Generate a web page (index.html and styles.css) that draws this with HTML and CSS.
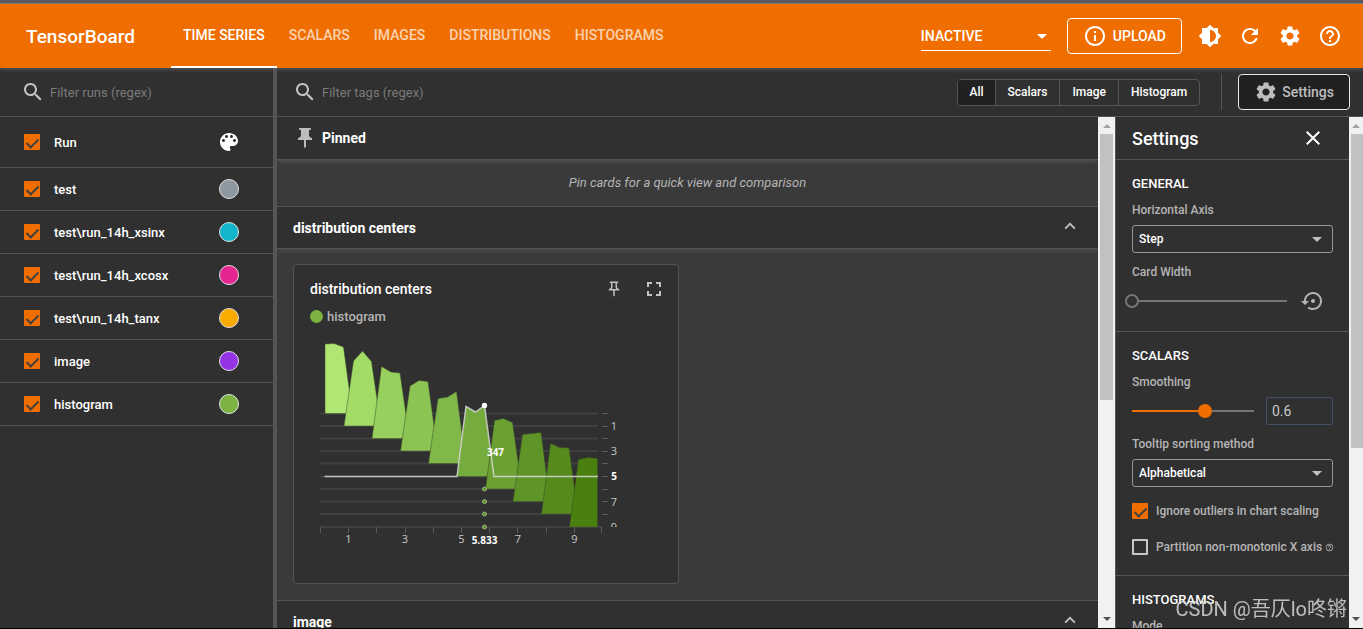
FILE: index.html
```html
<!DOCTYPE html>
<html lang="en">
<head>
<meta charset="utf-8">
<title>TensorBoard</title>
<link rel="stylesheet" href="styles.css">
</head>
<body>
<svg class="sprite" aria-hidden="true">
  <symbol id="i-search" viewBox="0 0 24 24"><path d="M15.5 14h-.79l-.28-.27C15.41 12.59 16 11.11 16 9.5 16 5.91 13.09 3 9.5 3S3 5.91 3 9.5 5.91 16 9.5 16c1.61 0 3.09-.59 4.23-1.57l.27.28v.79l5 4.99L20.49 19l-4.99-5zm-6 0C7.01 14 5 11.99 5 9.5S7.01 5 9.5 5 14 7.01 14 9.5 11.99 14 9.5 14z"/></symbol>
  <symbol id="i-gear" viewBox="0 0 24 24"><path d="M19.14 12.94c.04-.3.06-.61.06-.94 0-.32-.02-.64-.07-.94l2.03-1.58c.18-.14.23-.41.12-.61l-1.92-3.32c-.12-.22-.37-.29-.59-.22l-2.39.96c-.5-.38-1.03-.7-1.62-.94l-.36-2.54c-.04-.24-.24-.41-.48-.41h-3.84c-.24 0-.43.17-.47.41l-.36 2.54c-.59.24-1.13.57-1.62.94l-2.39-.96c-.22-.08-.47 0-.59.22L2.74 8.87c-.12.21-.08.47.12.61l2.03 1.58c-.05.3-.09.63-.09.94s.02.64.07.94l-2.03 1.58c-.18.14-.23.41-.12.61l1.92 3.32c.12.22.37.29.59.22l2.39-.96c.5.38 1.03.7 1.62.94l.36 2.54c.05.24.24.41.48.41h3.84c.24 0 .44-.17.47-.41l.36-2.54c.59-.24 1.13-.56 1.62-.94l2.39.96c.22.08.47 0 .59-.22l1.92-3.32c.12-.22.07-.47-.12-.61l-2.01-1.58zM12 15.6c-1.98 0-3.6-1.62-3.6-3.6s1.62-3.6 3.6-3.6 3.6 1.62 3.6 3.6-1.62 3.6-3.6 3.6z"/></symbol>
  <symbol id="i-help" viewBox="0 0 24 24"><path d="M11 18h2v-2h-2v2zm1-16C6.48 2 2 6.48 2 12s4.48 10 10 10 10-4.48 10-10S17.52 2 12 2zm0 18c-4.41 0-8-3.59-8-8s3.59-8 8-8 8 3.59 8 8-3.59 8-8 8zm0-14c-2.21 0-4 1.79-4 4h2c0-1.1.9-2 2-2s2 .9 2 2c0 2-3 1.75-3 5h2c0-2.25 3-2.5 3-5 0-2.21-1.79-4-4-4z"/></symbol>
  <symbol id="i-up" viewBox="0 0 24 24"><path d="M12 6l-6 6 1.41 1.41L12 8.83l4.59 4.58L18 12z"/></symbol>
</svg>

<header class="topbar">
  <h1 class="brand">TensorBoard</h1>
  <nav class="tabs">
    <a class="tab tab-active" href="#timeseries">TIME SERIES</a>
    <a class="tab" href="#scalars">SCALARS</a>
    <a class="tab" href="#images">IMAGES</a>
    <a class="tab" href="#distributions">DISTRIBUTIONS</a>
    <a class="tab" href="#histograms">HISTOGRAMS</a>
  </nav>
  <div class="topbar-actions">
    <div class="plugin-select">
      <select aria-label="Inactive plugins"><option>INACTIVE</option></select>
      <span class="caret"></span>
    </div>
    <button class="upload" type="button">
      <svg class="icon" viewBox="0 0 24 24"><path d="M11 7h2v2h-2zm0 4h2v6h-2zm1-9C6.48 2 2 6.48 2 12s4.480 10 10 10 10-4.480 10-10S17.520 2 12 2zm0 18c-4.410 0-8-3.590-8-8s3.590-8 8-8 8 3.590 8 8-3.590 8-8 8z"/></svg>
      UPLOAD
    </button>
    <div class="icon-row">
      <button class="icon-button" type="button" aria-label="Toggle theme"><svg class="icon" viewBox="0 0 24 24"><path d="M20 15.310L23.310 12 20 8.690V4h-4.690L12 .69 8.690 4H4v4.690L.69 12 4 15.310V20h4.690L12 23.310 15.310 20H20v-4.690zM12 18V6c3.310 0 6 2.690 6 6s-2.690 6-6 6z"/></svg></button>
      <button class="icon-button" type="button" aria-label="Reload"><svg class="icon" viewBox="0 0 24 24"><path d="M17.650 6.350C16.200 4.900 14.210 4 12 4c-4.420 0-7.990 3.580-7.990 8s3.570 8 7.990 8c3.730 0 6.840-2.550 7.730-6h-2.080c-.82 2.330-3.040 4-5.650 4-3.310 0-6-2.690-6-6s2.690-6 6-6c1.660 0 3.140.69 4.220 1.780L13 11h7V4l-2.350 2.350z"/></svg></button>
      <button class="icon-button" type="button" aria-label="Preferences"><svg class="icon"><use href="#i-gear"/></svg></button>
      <a class="icon-button" href="#help" aria-label="Help"><svg class="icon"><use href="#i-help"/></svg></a>
    </div>
  </div>
</header>

<div class="workspace">
  <aside class="runs">
    <label class="filter">
      <svg class="icon"><use href="#i-search"/></svg>
      <input type="text" placeholder="Filter runs (regex)" aria-label="Filter runs">
    </label>
    <div class="run run-head">
      <label class="check"><input type="checkbox" checked>Run</label>
      <button class="icon-button palette" type="button" aria-label="Color runs"><svg class="icon" viewBox="0 0 24 24"><path d="M12 3c-4.970 0-9 4.030-9 9s4.030 9 9 9c.83 0 1.500-.67 1.500-1.500 0-.39-.15-.74-.39-1.010-.23-.26-.38-.61-.38-.99 0-.83.67-1.500 1.500-1.500H16c2.760 0 5-2.240 5-5 0-4.420-4.030-8-9-8zm-5.500 9c-.83 0-1.500-.67-1.500-1.500S5.670 9 6.500 9 8 9.670 8 10.500 7.330 12 6.500 12zm3-4C8.670 8 8 7.330 8 6.500S8.670 5 9.500 5s1.500.67 1.500 1.500S10.330 8 9.500 8zm5 0c-.83 0-1.500-.67-1.500-1.500S13.670 5 14.500 5s1.500.67 1.500 1.500S15.330 8 14.500 8zm3 4c-.83 0-1.500-.67-1.500-1.500S16.670 9 17.500 9s1.500.67 1.500 1.500-.67 1.500-1.500 1.500z"/></svg></button>
    </div>
    <div class="run"><label class="check"><input type="checkbox" checked>test</label><button class="swatch gray" type="button" aria-label="test color"></button></div>
    <div class="run"><label class="check"><input type="checkbox" checked>test\run_14h_xsinx</label><button class="swatch cyan" type="button" aria-label="xsinx color"></button></div>
    <div class="run"><label class="check"><input type="checkbox" checked>test\run_14h_xcosx</label><button class="swatch pink" type="button" aria-label="xcosx color"></button></div>
    <div class="run"><label class="check"><input type="checkbox" checked>test\run_14h_tanx</label><button class="swatch amber" type="button" aria-label="tanx color"></button></div>
    <div class="run"><label class="check"><input type="checkbox" checked>image</label><button class="swatch purple" type="button" aria-label="image color"></button></div>
    <div class="run"><label class="check"><input type="checkbox" checked>histogram</label><button class="swatch green" type="button" aria-label="histogram color"></button></div>
  </aside>

  <main class="content">
    <div class="toolbar">
      <label class="filter">
        <svg class="icon"><use href="#i-search"/></svg>
        <input type="text" placeholder="Filter tags (regex)" aria-label="Filter tags">
      </label>
      <div class="chips">
        <button class="chip chip-on" type="button">All</button>
        <button class="chip" type="button">Scalars</button>
        <button class="chip" type="button">Image</button>
        <button class="chip" type="button">Histogram</button>
      </div>
      <div class="settings-slot">
        <button class="settings-button" type="button"><svg class="icon"><use href="#i-gear"/></svg>Settings</button>
      </div>
    </div>

    <div class="split">
      <div class="cards">
        <div class="group-head">
          <svg class="icon pin" viewBox="0 0 24 24"><path d="M16 9V4h1c.55 0 1-.45 1-1s-.45-1-1-1H7c-.55 0-1 .45-1 1s.45 1 1 1h1v5c0 1.660-1.340 3-3 3v2h5.970v7l1 1 1-1v-7H19v-2c-1.660 0-3-1.340-3-3z"/></svg>
          <h2>Pinned</h2>
        </div>
        <p class="pin-hint">Pin cards for a quick view and comparison</p>
        <div class="group-head ruled">
          <h2>distribution centers</h2>
          <button class="icon-button fold" type="button" aria-label="Collapse distribution centers"><svg class="icon"><use href="#i-up"/></svg></button>
        </div>
        <div class="card-grid">
          <article class="card">
            <div class="card-head">
              <h3>distribution centers</h3>
              <button class="icon-button" type="button" aria-label="Pin card"><svg class="icon icon-small" viewBox="0 0 24 24"><path d="M14 4v5c0 1.120.37 2.160 1 3H9c.65-.86 1-1.900 1-3V4h4m3-2H7c-.55 0-1 .45-1 1s.45 1 1 1h1v5c0 1.660-1.340 3-3 3v2h5.970v7l1 1 1-1v-7H19v-2c-1.660 0-3-1.340-3-3V4h1c.55 0 1-.45 1-1s-.45-1-1-1z"/></svg></button>
              <button class="icon-button" type="button" aria-label="Full size"><svg class="icon" viewBox="0 0 24 24"><path d="M7 14H5v5h5v-2H7v-3zm-2-4h2V7h3V5H5v5zm12 7h-3v2h5v-5h-2v3zM14 5v2h3v3h2V5h-5z"/></svg></button>
            </div>
            <div class="legend"><span class="legend-dot"></span>histogram</div>
            <svg class="chart" viewBox="310 330 352 230" role="img" aria-label="Histogram of distribution centers by step">
              <defs><clipPath id="axis-clip"><rect x="600" y="330" width="30" height="197"/></clipPath></defs>
              <path class="grid" d="M320 413.500H598M320 426H598M320 438.500H598M320 451H598M320 463.500H598M320 476.500H598M320 489H598M320 501.500H598M320 514H598M320 527H602"/>
              <path class="ticks" d="M602 413.500h6M602 426.500h6M602 438.500h6M602 451.500h6M602 463.500h6M602 476.500h6M602 489.500h6M602 501.500h6M602 514.500h6M320.500 527v6M348.500 527v6M376.500 527v6M405.500 527v6M433.500 527v6M461.500 527v6M489.500 527v6M517.500 527v6M546.500 527v6M574.500 527v6M601.500 527v6"/>
              <g class="hist">
                <path fill="#b0e673" d="M325 413.500V344L334 343.500 343.500 347 352.500 413.500z"/>
                <path fill="#a2dc67" d="M344 426L353.500 361 362.500 351 371.500 361.500 381 426z"/>
                <path fill="#97d05e" d="M372 438.500L381.500 366.500 391 372 400 373 409.500 438.500z"/>
                <path fill="#8bc453" d="M400.500 451L410 386 419 380.500 428 381.500 437.500 451z"/>
                <path fill="#80b84a" d="M428.500 463.500L438 398.500 447.500 397 456.500 391.500 466 463.500z"/>
                <path fill="#76ac3e" d="M457 476.500L466 406.500 475.500 412 484.500 405.500 494 476.500z"/>
                <path fill="#6ba033" d="M485.500 489L494.500 420.500 503.500 418.500 512.500 422.500 522 489z"/>
                <path fill="#5f9428" d="M513 501.500L522.500 434.500 541 432.500 550 501.500z"/>
                <path fill="#568a1c" d="M541.500 514L550.500 443.500 559.500 447.500 569 448 578 514z"/>
                <path fill="#4a800f" d="M569.500 527L578.500 459.500 588 457.500 597.500 458.500V527z"/>
              </g>
              <path class="hover-line" d="M324.500 476.500H457L466 406.500 475.500 412 484.500 405.500 494 476.500H598"/>
              <circle class="hover-dot" cx="484.500" cy="405.500" r="2.700"/>
              <g class="step-dots"><circle cx="484.500" cy="489" r="2"/><circle cx="484.500" cy="501.500" r="2"/><circle cx="484.500" cy="514" r="2"/><circle cx="484.500" cy="527" r="2"/></g>
              <g class="labels">
                <text x="348.500" y="543">1</text><text x="405" y="543">3</text><text x="461.500" y="543">5</text><text x="518" y="543">7</text><text x="574.500" y="543">9</text>
                <text x="614" y="430">1</text><text x="614" y="455">3</text><text class="strong" x="614" y="480">5</text><text x="614" y="506">7</text>
                <g clip-path="url(#axis-clip)"><text x="614" y="531">9</text></g>
                <text class="strong" x="484.500" y="544">5.833</text>
                <text class="strong" x="495.500" y="456">347</text>
              </g>
            </svg>
          </article>
        </div>
        <div class="group-head ruled">
          <h2>image</h2>
          <button class="icon-button fold" type="button" aria-label="Collapse image"><svg class="icon"><use href="#i-up"/></svg></button>
        </div>
      </div>
      <div class="scrollbar"><span class="arrow arrow-up"></span><span class="thumb thumb-main"></span><span class="arrow arrow-down"></span></div>

      <aside class="settings">
        <div class="settings-head">
          <h2>Settings</h2>
          <button class="icon-button" type="button" aria-label="Close settings"><svg class="icon" viewBox="0 0 24 24"><path d="M19 6.410L17.590 5 12 10.590 6.410 5 5 6.410 10.590 12 5 17.590 6.410 19 12 13.410 17.590 19 19 17.590 13.410 12z"/></svg></button>
        </div>
        <section class="section">
          <h3>GENERAL</h3>
          <div class="field">
            <label for="axis">Horizontal Axis</label>
            <div class="dropdown"><select id="axis"><option>Step</option></select><span class="caret"></span></div>
          </div>
          <div class="field">
            <label for="width">Card Width</label>
            <div class="slider-row">
              <input class="slider slider-empty" id="width" type="range" min="0" max="100" value="0">
              <button class="icon-button reset" type="button" aria-label="Reset card width"><svg class="icon" viewBox="0 0 24 24"><path d="M14 12c0-1.100-.9-2-2-2s-2 .9-2 2 .9 2 2 2 2-.9 2-2zm-2-9c-4.970 0-9 4.030-9 9H0l4 4 4-4H5c0-3.870 3.130-7 7-7s7 3.130 7 7-3.130 7-7 7c-1.510 0-2.910-.49-4.060-1.300l-1.420 1.440C8.040 20.300 9.940 21 12 21c4.970 0 9-4.030 9-9s-4.030-9-9-9z"/></svg></button>
            </div>
          </div>
        </section>
        <section class="section">
          <h3>SCALARS</h3>
          <div class="field">
            <label for="smoothing">Smoothing</label>
            <div class="slider-row">
              <input class="slider" id="smoothing" type="range" min="0" max="1" step="0.01" value="0.6">
              <input class="number" type="text" value="0.6" aria-label="Smoothing value">
            </div>
          </div>
          <div class="field">
            <label for="sorting">Tooltip sorting method</label>
            <div class="dropdown"><select id="sorting"><option>Alphabetical</option></select><span class="caret"></span></div>
          </div>
          <label class="check option"><input type="checkbox" checked>Ignore outliers in chart scaling</label>
          <label class="check option"><input type="checkbox"><span class="option-text">Partition non-monotonic X axis<svg class="icon icon-tiny"><use href="#i-help"/></svg></span></label>
        </section>
        <section class="section">
          <h3>HISTOGRAMS</h3>
          <div class="field"><label for="mode">Mode</label><div class="dropdown"><select id="mode"><option>Offset</option></select><span class="caret"></span></div></div>
        </section>
      </aside>
      <div class="scrollbar scrollbar-edge"><span class="arrow arrow-up"></span><span class="thumb thumb-settings"></span><span class="arrow arrow-down"></span></div>
    </div>
  </main>
</div>
<div class="watermark">CSDN @吾仄lo咚锵</div>
</body>
</html>
```

FILE: styles.css
```css
* { box-sizing: border-box; }

body {
  margin: 0;
  height: 100vh;
  display: flex;
  flex-direction: column;
  overflow: hidden;
  background: #303030;
  border-top: 3px solid #59585f;
  border-bottom: 1px solid #000;
  color: #fff;
  font-family: Roboto, "Noto Sans CJK SC", sans-serif;
  font-size: 13px;
  font-weight: 500;
}

h1, h2, h3, p { margin: 0; font-weight: 500; }
button, input, select { font: inherit; color: inherit; margin: 0; }
button { cursor: pointer; }
select {
  appearance: none;
  background: none;
  border: 0;
  width: 100%;
  height: 100%;
}

.sprite { position: absolute; width: 0; height: 0; }
.icon { width: 24px; height: 24px; fill: currentColor; flex: none; display: block; }
.icon-small { width: 18px; height: 18px; }
.icon-tiny { width: 9px; height: 9px; }
.icon-button {
  display: grid;
  place-items: center;
  width: 40px;
  height: 40px;
  padding: 0;
  background: none;
  border: 0;
  color: inherit;
  flex: none;
}
.caret {
  position: absolute;
  right: 10px;
  top: 50%;
  margin-top: -2px;
  border: 5px solid transparent;
  border-top-color: currentColor;
  border-bottom: 0;
  pointer-events: none;
}

/* Top bar */
.topbar {
  flex: none;
  display: flex;
  align-items: center;
  height: 65px;
  padding: 0 13px 0 26px;
  background: #f06e00;
  border-top: 1px solid #8a7a70;
  box-shadow: 0 1px 5px #5c5c5c;
  position: relative;
}
.brand { font-size: 19px; width: 145px; flex: none; }
.tabs { display: flex; align-self: stretch; }
.tab {
  display: flex;
  align-items: center;
  padding: 0 12px;
  border-bottom: 2px solid transparent;
  color: rgba(255, 255, 255, 0.7);
  font-size: 14px;
  text-decoration: none;
}
.tab-active { color: #fff; border-color: #fff; }
.topbar-actions { display: flex; align-items: center; margin-left: auto; }
.plugin-select {
  position: relative;
  width: 130px;
  height: 29px;
  margin-right: 16px;
  border-bottom: 1px solid #fff;
  font-size: 14px;
}
.plugin-select select { padding: 0; }
.plugin-select .caret { right: 4px; }
.upload {
  display: flex;
  align-items: center;
  gap: 6px;
  height: 36px;
  padding: 0 15px;
  background: none;
  border: 1px solid #fff;
  border-radius: 4px;
  font-size: 14px;
}
.icon-row { display: flex; margin-left: 8px; }

/* Runs sidebar */
.workspace { flex: 1; display: flex; min-height: 0; }
.runs { flex: none; width: 277px; border-right: 4px solid #555; }
.filter {
  display: flex;
  align-items: center;
  gap: 5px;
  flex: 1;
  height: 48px;
  padding-left: 21px;
  color: #c5c5c5;
}
.runs .filter { height: 49px; border-bottom: 1px solid #555; }
.filter input {
  flex: 1;
  min-width: 0;
  padding: 0;
  background: none;
  border: 0;
  outline: 0;
  font-weight: 400;
}
.filter input::placeholder { color: #7a7a7a; }
.run {
  display: flex;
  align-items: center;
  justify-content: space-between;
  height: 43px;
  padding: 0 34px 0 24px;
  border-bottom: 1px solid #555;
}
.run-head { height: 51px; padding-right: 32px; }
.palette { width: 24px; height: 24px; }
.check { display: flex; align-items: center; gap: 14px; }
.check input {
  appearance: none;
  flex: none;
  display: flex;
  justify-content: center;
  width: 16px;
  height: 16px;
  border: 2px solid #c8c8c8;
  border-radius: 1px;
}
.check input:checked { background: #f06e00; border: 0; padding-top: 2px; }
.check input:checked::before {
  content: "";
  width: 5px;
  height: 10px;
  border: solid #44403c;
  border-width: 0 2px 2px 0;
  transform: rotate(45deg);
}
.swatch { width: 20px; height: 20px; padding: 0; border: 1px solid #e0e0e0; border-radius: 50%; }
.gray { background: #8e98a3; }
.cyan { background: #12b5cb; }
.pink { background: #e52592; }
.amber { background: #f9ab00; }
.purple { background: #9334e6; }
.green { background: #7cb342; }

/* Toolbar */
.content { flex: 1; min-width: 0; display: flex; flex-direction: column; }
.toolbar {
  flex: none;
  display: flex;
  align-items: center;
  height: 49px;
  padding-right: 13px;
  border-bottom: 1px solid #555;
}
.toolbar .filter { padding-left: 16px; }
.chips { display: flex; height: 27px; border: 1px solid #555; border-radius: 4px; overflow: hidden; }
.chip { padding: 0 12px; background: none; border: 0; border-left: 1px solid #555; font-size: 12px; }
.chip-on { background: #212121; border-left: 0; padding: 0 11px; }
.settings-slot { margin-left: 21px; padding-left: 16px; border-left: 1px solid #555; }
.settings-button {
  display: flex;
  align-items: center;
  gap: 4px;
  height: 36px;
  padding: 0 15px;
  background: #212121;
  border: 1px solid #e8e8e8;
  border-radius: 4px;
  color: #bdbdbd;
  font-size: 14px;
}

/* Card groups */
.split { flex: 1; display: flex; min-height: 0; }
.cards { flex: 1; min-width: 0; overflow: hidden; background: #3a3a3a; }
.group-head {
  display: flex;
  align-items: center;
  height: 43px;
  padding: 0 8px 0 16px;
  background: #303030;
  border-bottom: 1px solid #555;
  box-shadow: 0 3px 4px -1px #505050;
}
.group-head.ruled { border-top: 1px solid #555; }
.group-head h2 { font-size: 14px; font-weight: 700; }
.pin { color: #bdbdbd; margin-right: 5px; }
.fold { margin-left: auto; color: #c5c5c5; }
.fold .icon { width: 22px; height: 22px; }
.pin-hint {
  height: 46px;
  line-height: 46px;
  text-align: center;
  color: #b5b5b5;
  font-style: italic;
  font-weight: 400;
}
.card-grid { display: grid; grid-template-columns: repeat(2, 386px); gap: 16px; padding: 15px 16px 16px; }
.card { height: 320px; padding: 4px 4px 0 16px; background: #303030; border: 1px solid #555; border-radius: 4px; }
.card-head { display: flex; align-items: center; color: #c0c0c0; }
.card-head h3 { flex: 1; color: #fff; font-size: 14px; }
.legend { display: flex; align-items: center; gap: 4px; height: 14px; color: #b5b5b5; }
.legend-dot { width: 13px; height: 13px; border-radius: 50%; background: #7cb342; }

/* Histogram chart */
.chart { display: block; width: 352px; height: 230px; margin-top: 7px; }
.grid { fill: none; stroke: #404040; stroke-width: 2; }
.ticks { fill: none; stroke: #5a5a5a; }
.hist path { stroke: rgba(60, 75, 40, 0.5); stroke-width: 1; }
.hover-line { fill: none; stroke: #e0e0e0; stroke-opacity: 0.8; stroke-width: 1.5; }
.hover-dot { fill: #fff; }
.step-dots circle { fill: #5f9428; stroke: #9cb585; }
.labels text { fill: #c8c8c8; font-family: "Open Sans", sans-serif; font-size: 11px; font-weight: 400; text-anchor: middle; }
.labels .strong { fill: #fff; font-weight: 700; font-size: 10px; }

/* Scrollbars */
.scrollbar { flex: none; width: 17px; display: flex; flex-direction: column; align-items: center; background: #f1f1f1; }
.arrow { border: 4px solid transparent; flex: none; }
.arrow-up { border-top: 0; border-bottom-color: #a3a3a3; margin: 7px 0 6px; }
.arrow-down { border-bottom: 0; border-top-color: #505050; margin: auto 0 7px; }
.thumb { width: 13px; background: #c1c1c1; }
.thumb-main { height: 52%; }
.thumb-settings { height: 61.5%; }
.scrollbar-edge { width: 14px; }
.scrollbar-edge .thumb { width: 12px; align-self: flex-end; }

/* Settings pane */
.settings { flex: none; width: 234px; overflow: hidden; border-left: 1px solid #555; background: #303030; }
.settings-head {
  display: flex;
  align-items: center;
  justify-content: space-between;
  height: 43px;
  padding: 0 16px;
  border-bottom: 1px solid #555;
}
.settings-head h2 { font-size: 18px; }
.section { padding: 16px; border-bottom: 1px solid #555; font-size: 12px; color: #b5b5b5; }
.section h3 { line-height: 16px; font-size: 13px; color: #fff; }
.field { display: grid; gap: 7px; padding-top: 10px; line-height: 16px; }
.field + .field { padding-top: 11px; }
.dropdown { position: relative; height: 28px; border: 1px solid #8e98a3; border-radius: 3px; color: #c0c0c0; }
.dropdown select { padding: 0 6px; color: #fff; }
.slider-row { display: flex; align-items: center; height: 28px; }
.slider {
  appearance: none;
  flex: 1;
  min-width: 0;
  height: 14px;
  margin: 0 5px 0 -7px;
  background: linear-gradient(90deg, #f06e00 60%, #757575 60%) center / calc(100% - 14px) 2px no-repeat;
}
.slider::-webkit-slider-thumb { appearance: none; width: 14px; height: 14px; border-radius: 50%; background: #f06e00; }
.slider-empty { margin-right: -1px; background-image: linear-gradient(#757575, #757575); }
.slider-empty::-webkit-slider-thumb { background: #303030; border: 2px solid #757575; }
.number { width: 67px; height: 28px; padding: 0 5px; background: none; border: 1px solid #425066; border-radius: 2px; font-size: 14px; font-weight: 400; color: #c8c8c8; }
.option { height: 24px; gap: 8px; margin-top: 12px; white-space: nowrap; }
.option-text { display: flex; align-items: center; gap: 3px; }

.watermark {
  position: fixed;
  right: 16px;
  bottom: 6px;
  font-size: 20px;
  font-weight: 400;
  color: rgba(225, 225, 225, 0.8);
  line-height: 28px;
  pointer-events: none;
}
```
